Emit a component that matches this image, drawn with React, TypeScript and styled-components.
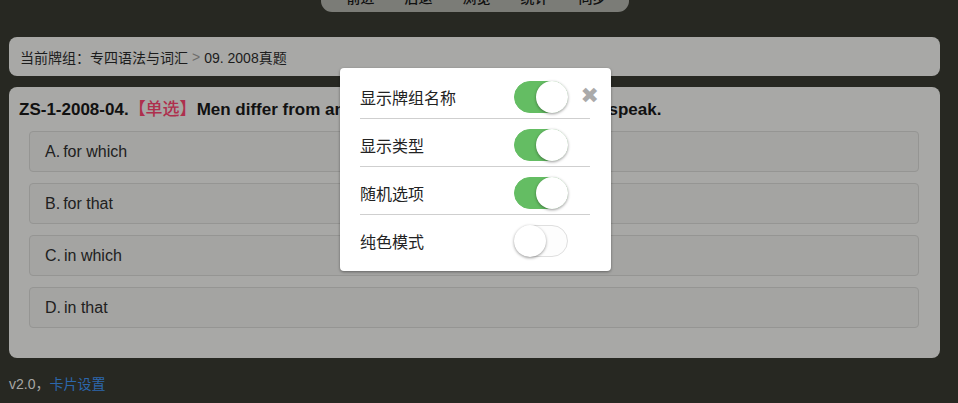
import React from "react";
import styled, { createGlobalStyle } from "styled-components";

const Global = createGlobalStyle`
  html, body { margin: 0; padding: 0; background: #272822; }
  body { font-family: "Liberation Sans", "Noto Sans CJK SC", sans-serif; overflow: hidden; }
  #root { width: 958px; height: 403px; }
`;

const Page = styled.div`
  position: relative;
  width: 931px;
  margin-left: 9px;
  display: flex;
  flex-direction: column;
`;

const Nav = styled.div`
  align-self: center;
  margin-top: -18px;
  height: 30px;
  width: 308px;
  box-sizing: border-box;
  background: #7b7c77;
  border-radius: 0 0 11px 11px;
  display: flex;
  justify-content: center;
  gap: 30px;
  padding-left: 4px;
`;

const NavItem = styled.span`
  font-family: "Noto Sans CJK SC", sans-serif;
  font-size: 14px;
  line-height: 14px;
  margin-top: 8px;
  color: #111;
  font-weight: 500;
`;

const Crumb = styled.div`
  margin-top: 25px;
  height: 39px;
  background: #a8a8a6;
  border-radius: 8px;
  display: flex;
  align-items: center;
  padding-left: 11px;
  font-size: 14px;
  color: #1c1c1c;
`;

const Sep = styled.span`
  color: #6e6e6c;
  margin: 0 4px;
`;

const Card = styled.div`
  margin-top: 11px;
  background: #a8a8a6;
  border-radius: 8px;
  padding: 10px 21px 30px 20px;
  display: flex;
  flex-direction: column;
  gap: 11px;
`;

const Title = styled.div`
  margin-left: -10px;
  font-size: 17px;
  font-weight: bold;
  color: #111;
  line-height: 21px;
  white-space: nowrap;
  margin-bottom: 0px;
`;

const Tag = styled.span`
  color: #ae2f4d;
  font-family: "Noto Sans CJK SC", sans-serif;
  font-weight: 500;
`;

const Option = styled.div`
  height: 39px;
  border: 1px solid #959593;
  border-radius: 4px;
  background: #a4a4a2;
  display: flex;
  align-items: center;
  padding-left: 15px;
  font-size: 16px;
  color: #202020;
`;

const Letter = styled.span`
  margin-right: 3px;
`;

const Footer = styled.div`
  margin-top: 15px;
  font-size: 14px;
  color: #a6a6a4;
`;

const Link = styled.a`
  color: #2c67ac;
  text-decoration: none;
  font-family: "Noto Sans CJK SC", sans-serif;
`;

const Modal = styled.div`
  position: absolute;
  left: 331px;
  top: 68px;
  width: 271px;
  box-sizing: border-box;
  background: #fff;
  border-radius: 4px;
  box-shadow: 0 1px 3px rgba(0, 0, 0, 0.4);
  padding: 3px 21px 9px 20px;
`;

const Close = styled.span`
  position: absolute;
  right: 12px;
  top: 17px;
  font-size: 22px;
  line-height: 22px;
  font-weight: bold;
  color: #aaa;
  font-family: "DejaVu Sans", sans-serif;
`;

const Row = styled.div<{ $last?: boolean }>`
  height: 47px;
  display: flex;
  align-items: center;
  border-bottom: ${(p) => (p.$last ? "none" : "1px solid #cfcfcf")};
`;

const RowInner = styled.div`
  flex: 1;
  display: flex;
  align-items: center;
  justify-content: space-between;
  padding-top: 5px;
  height: 42px;
`;

const Label = styled.span`
  font-family: "Noto Sans CJK SC", sans-serif;
  font-size: 16px;
  color: #222;
`;

const Toggle = styled.span<{ $on: boolean }>`
  position: relative;
  width: 54px;
  height: 32px;
  box-sizing: border-box;
  border-radius: 16px;
  margin-right: 22px;
  background: ${(p) => (p.$on ? "#64bd63" : "#fdfdfd")};
  border: 1px solid ${(p) => (p.$on ? "#64bd63" : "#dfdfdf")};
`;

const Knob = styled.span<{ $on: boolean }>`
  position: absolute;
  top: -1px;
  ${(p) => (p.$on ? "right: -1px;" : "left: -1px;")}
  width: 32px;
  height: 32px;
  border-radius: 50%;
  background: #fff;
  box-shadow: 0 1px 3px rgba(0, 0, 0, 0.4);
`;

const settings = [
  { label: "显示牌组名称", on: true },
  { label: "显示类型", on: true },
  { label: "随机选项", on: true },
  { label: "纯色模式", on: false },
];

const options = [
  ["A.", "for which"],
  ["B.", "for that"],
  ["C.", "in which"],
  ["D.", "in that"],
];

export default function App() {
  return (
    <>
      <Global />
      <Page>
        <Nav>
          <NavItem>前进</NavItem>
          <NavItem>后退</NavItem>
          <NavItem>浏览</NavItem>
          <NavItem>统计</NavItem>
          <NavItem>同步</NavItem>
        </Nav>
        <Crumb>
          当前牌组：专四语法与词汇<Sep>&gt;</Sep>09. 2008真题
        </Crumb>
        <Card>
          <Title>
            ZS-1-2008-04.<Tag>【单选】</Tag>Men differ from animals ______ they can think and speak.
          </Title>
          {options.map(([l, t]) => (
            <Option key={l}>
              <Letter>{l}</Letter>
              {t}
            </Option>
          ))}
        </Card>
        <Footer>
          v2.0，<Link href="#">卡片设置</Link>
        </Footer>
        <Modal>
          <Close>✖</Close>
          {settings.map((s, i) => (
            <Row key={s.label} $last={i === settings.length - 1}>
              <RowInner>
                <Label>{s.label}</Label>
                <Toggle $on={s.on}>
                  <Knob $on={s.on} />
                </Toggle>
              </RowInner>
            </Row>
          ))}
        </Modal>
      </Page>
    </>
  );
}
